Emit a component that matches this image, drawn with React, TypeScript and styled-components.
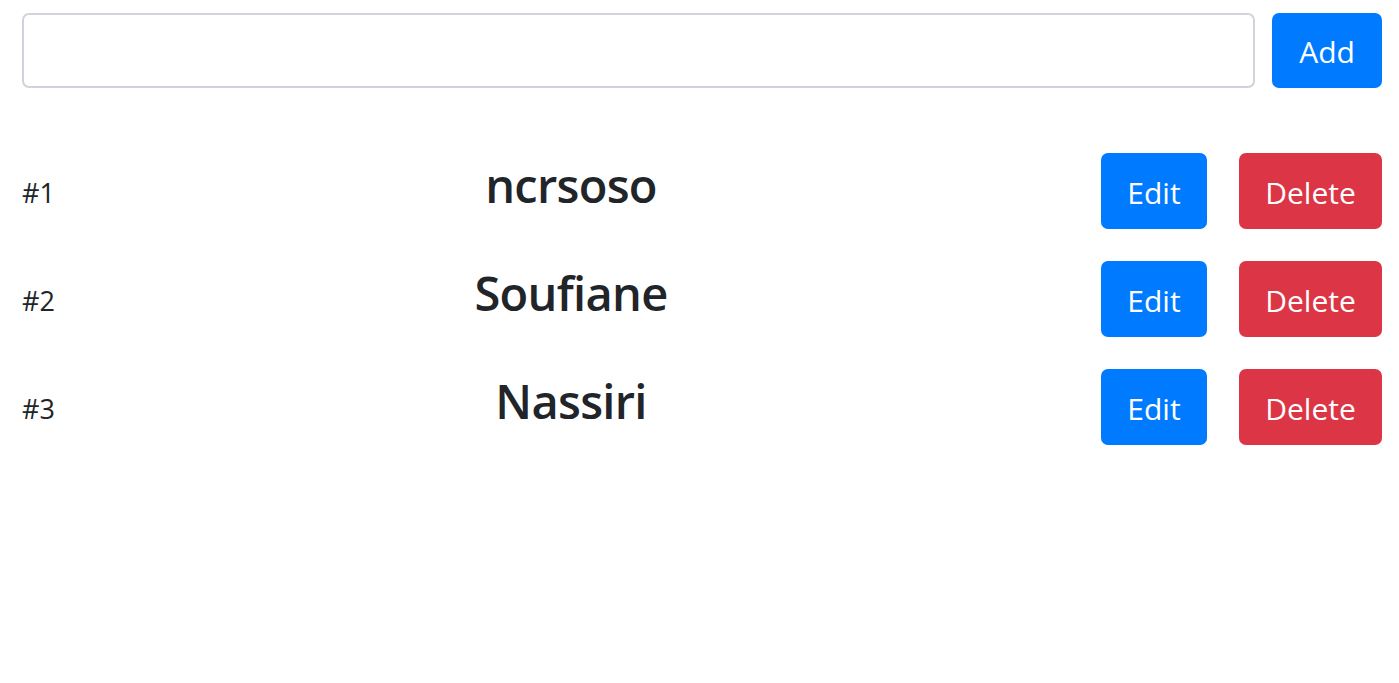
import React from "react";
import styled, { createGlobalStyle } from "styled-components";

const GlobalStyle = createGlobalStyle`
  html, body {
    margin: 0;
    padding: 0;
    background: #ffffff;
  }
  body {
    font-family: "Open Sans", "Noto Sans", "Liberation Sans", sans-serif;
    color: #212529;
  }
  * { box-sizing: border-box; }
`;

const Page = styled.div`
  padding: 13px 17px 0 22px;
`;

const Form = styled.form`
  display: flex;
  gap: 17px;
  align-items: stretch;
`;

const TextInput = styled.input`
  flex: 1;
  height: 75px;
  border: 2px solid #ced4da;
  border-radius: 7px;
  font-family: inherit;
  font-size: 30px;
  padding: 0 18px;
  color: #495057;
  outline: none;
  background: #fff;
`;

const Button = styled.button<{ $variant?: "primary" | "danger"; $width: number }>`
  display: inline-flex;
  align-items: center;
  justify-content: center;
  width: ${(p) => p.$width}px;
  height: 76px;
  padding: 2px 0 0 0;
  border: none;
  border-radius: 7px;
  font-family: inherit;
  font-size: 30px;
  font-weight: 400;
  color: #ffffff;
  background: ${(p) => (p.$variant === "danger" ? "#dc3545" : "#007bff")};
  cursor: pointer;
`;

const AddButton = styled(Button)`
  height: 75px;
`;

const List = styled.div`
  display: flex;
  flex-direction: column;
  gap: 32px;
  margin-top: 65px;
`;

const Row = styled.div`
  display: grid;
  grid-template-columns: 90px 918px 1fr;
  align-items: center;
  height: 76px;
`;

const Index = styled.span`
  font-size: 27px;
  line-height: 1;
  margin-top: 3px;
`;

const Name = styled.h2`
  margin: 0 0 12px 0;
  text-align: center;
  font-size: 47px;
  font-weight: 600;
  letter-spacing: -0.7px;
  line-height: 1.2;
  color: #212529;
`;

const Actions = styled.div`
  display: flex;
  justify-content: flex-end;
  gap: 32px;
`;

const items = ["ncrsoso", "Soufiane", "Nassiri"];

export default function App() {
  return (
    <>
      <GlobalStyle />
      <Page>
        <Form onSubmit={(e) => e.preventDefault()}>
          <TextInput type="text" />
          <AddButton type="submit" $width={110}>Add</AddButton>
        </Form>
        <List>
          {items.map((name, i) => (
            <Row key={name}>
              <Index>#{i + 1}</Index>
              <Name>{name}</Name>
              <Actions>
                <Button $width={106}>Edit</Button>
                <Button $variant="danger" $width={143}>Delete</Button>
              </Actions>
            </Row>
          ))}
        </List>
      </Page>
    </>
  );
}
